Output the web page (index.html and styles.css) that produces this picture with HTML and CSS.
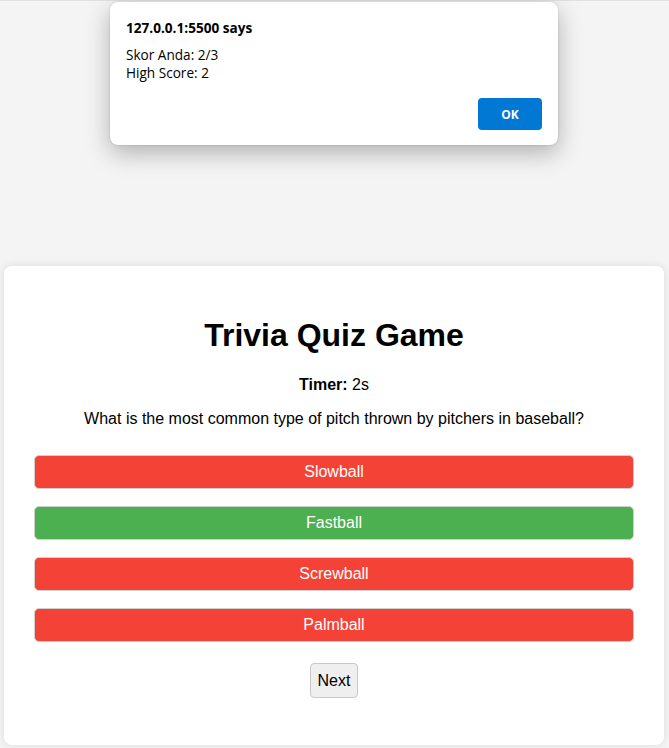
FILE: index.html
```html
<!DOCTYPE html>
<html lang="en">
<head>
<meta charset="utf-8">
<title>Trivia Quiz Game</title>
<link rel="stylesheet" href="styles.css">
</head>
<body>
<div class="page">
  <div class="container">
    <h1 class="title">Trivia Quiz Game</h1>
    <p class="timer"><strong>Timer:</strong> 2s</p>
    <p class="question">What is the most common type of pitch thrown by pitchers in baseball?</p>
    <div class="options">
      <button class="option wrong">Slowball</button>
      <button class="option right">Fastball</button>
      <button class="option wrong">Screwball</button>
      <button class="option wrong">Palmball</button>
    </div>
    <button class="next">Next</button>
  </div>
</div>
<div class="dialog">
  <div class="dialog-title">127.0.0.1:5500 says</div>
  <div class="dialog-body">Skor Anda: 2/3<br>High Score: 2</div>
  <div class="dialog-actions"><button class="dialog-ok">OK</button></div>
</div>
</body>
</html>
```
FILE: styles.css
```css
html, body {
  margin: 0;
  padding: 0;
}
body {
  background: #f4f4f4;
  font-family: "Liberation Sans", Arial, sans-serif;
  height: 748px;
  overflow: hidden;
  border-top: 1px solid #e2e2e2;
  box-sizing: border-box;
}
.page {
  display: flex;
  justify-content: flex-start;
  padding: 265px 0 0 4px;
}
.container {
  width: 600px;
  padding: 30px 30px 47px;
  background: #fff;
  border-radius: 8px;
  box-shadow: 0 0 10px rgba(0, 0, 0, 0.1);
  text-align: center;
}
.title {
  font-size: 32px;
  font-weight: bold;
  margin: 21px 0 22px;
  line-height: 37px;
}
.timer {
  margin: 0;
  font-size: 16px;
  line-height: 18px;
}
.question {
  margin: 16px 0 0;
  font-size: 16px;
  line-height: 18px;
}
.options {
  display: flex;
  flex-direction: column;
  gap: 17px;
  margin-top: 27px;
}
.option {
  height: 34px;
  border: 1px solid #cfcfcf;
  border-radius: 5px;
  color: #fff;
  font-family: "Liberation Sans", Arial, sans-serif;
  font-size: 16px;
  padding: 0;
}
.wrong { background: #f44336; }
.right { background: #4caf50; }
.next {
  margin-top: 21px;
  padding: 7px;
  border: 1px solid #c8c8c8;
  border-radius: 4px;
  background: #efefef;
  font-family: "Liberation Sans", Arial, sans-serif;
  font-size: 16px;
  line-height: 19px;
  color: #000;
}
.dialog {
  position: absolute;
  left: 110px;
  top: 2px;
  width: 448px;
  height: 143px;
  box-sizing: border-box;
  background: #fff;
  border-radius: 8px;
  box-shadow: 0 8px 24px rgba(0, 0, 0, 0.28), 0 0 2px rgba(0, 0, 0, 0.2);
  padding: 16px 16px 16px;
  font-family: "Open Sans", "Noto Sans", sans-serif;
  color: #000;
}
.dialog-title {
  font-size: 13.6px;
  font-weight: bold;
  line-height: 19px;
}
.dialog-body {
  margin-top: 9px;
  font-size: 13.6px;
  line-height: 18px;
}
.dialog-actions {
  display: flex;
  justify-content: flex-end;
  margin-top: 16px;
}
.dialog-ok {
  width: 64px;
  height: 32px;
  border: none;
  border-radius: 4px;
  background: #0078d4;
  color: #fff;
  font-family: "Open Sans", "Noto Sans", sans-serif;
  font-size: 12px;
  font-weight: bold;
}
```
